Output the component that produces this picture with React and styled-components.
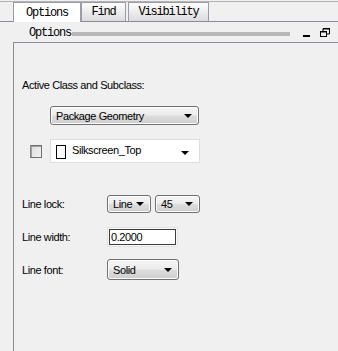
import React from 'react';
import styled, { createGlobalStyle, css } from 'styled-components';

const GlobalStyle = createGlobalStyle`
  html, body {
    margin: 0;
    padding: 0;
    background: #f0f0f0;
  }
  body {
    font-family: 'Liberation Sans', Arial, sans-serif;
    font-size: 11px;
    letter-spacing: -0.4px;
    color: #000;
  }
`;

const Window = styled.div`
  width: 338px;
  height: 351px;
  display: flex;
  flex-direction: column;
  background: #f0f0f0;
  overflow: hidden;
`;

const TopRule = styled.div`
  margin-top: 1px;
  height: 1px;
  background: #b4b4b4;
`;

const TabBar = styled.div`
  display: flex;
  align-items: flex-end;
  height: 19px;
  padding-left: 13px;
  border-bottom: 1px solid #8c8c98;
`;

const Tab = styled.div`
  box-sizing: border-box;
  width: ${p => p.$w}px;
  margin-right: ${p => p.$gap || 0}px;
  height: 19px;
  display: flex;
  align-items: center;
  justify-content: center;
  font-family: 'Liberation Mono', 'DejaVu Sans Mono', monospace;
  font-size: 12px;
  letter-spacing: -1.2px;
  border: 1px solid #9c9ca8;
  border-bottom: none;
  ${p => p.$active
    ? css`
        background: #fff;
        height: 20px;
        margin-bottom: -1px;
      `
    : css`
        background: linear-gradient(#fdfdfd, #dcdcdc);
      `}
`;

const HeaderRow = styled.div`
  display: flex;
  align-items: center;
  height: 20px;
  padding-left: 29px;
  padding-right: 8px;
`;

const HeaderTitle = styled.span`
  font-family: 'Liberation Mono', 'DejaVu Sans Mono', monospace;
  font-size: 12px;
  letter-spacing: -1.2px;
  margin-top: 1px;
`;

const GripBar = styled.div`
  width: 218px;
  height: 4px;
  margin-left: 1px;
  margin-top: 3px;
  background: #b8b8b8;
`;

const HeaderIcons = styled.div`
  display: flex;
  align-items: center;
  margin-left: 13px;
  gap: 10px;
`;

const Panel = styled.div`
  flex: 1;
  margin-left: 13px;
  border-top: 1px solid #8c8c98;
  border-left: 1px solid #8c8c98;
  padding: 36px 0 0 8px;
  display: flex;
  flex-direction: column;
`;

const SectionLabel = styled.div`
  height: 13px;
  line-height: 13px;
`;

const Row = styled.div`
  display: flex;
  align-items: center;
  margin-top: ${p => p.$mt}px;
`;

const FieldLabel = styled.div`
  width: 85px;
`;

const Select = styled.div`
  box-sizing: border-box;
  width: ${p => p.$w}px;
  height: ${p => p.$h || 18}px;
  margin-left: ${p => p.$ml || 0}px;
  display: flex;
  align-items: center;
  padding: 0 6px 0 5px;
  border: 1px solid #707070;
  border-radius: 3px;
  background: linear-gradient(#f6f6f6 0%, #ececec 45%, #dcdcdc 55%, #cfcfcf 100%);
  box-shadow: inset 0 0 0 1px #fcfcfc;
`;

const SelectText = styled.span`
  flex: 1;
  white-space: nowrap;
`;

const Arrow = styled.span`
  width: 0;
  height: 0;
  border-left: 4px solid transparent;
  border-right: 4px solid transparent;
  border-top: 4px solid #000;
`;

const CheckBox = styled.div`
  box-sizing: border-box;
  width: 12px;
  height: 13px;
  margin-left: 8px;
  border: 1px solid #707070;
  border-left-color: #8a8a8a;
  background: linear-gradient(135deg, #dcdcdc, #f4f4f4);
  box-shadow: inset 1px 1px 0 #a0a0a0;
`;

const ClassBox = styled.div`
  box-sizing: border-box;
  width: 150px;
  height: 24px;
  margin-left: 8px;
  display: flex;
  align-items: center;
  padding: 0 10px 0 5px;
  background: #fff;
  border: 1px solid #dedede;
`;

const Swatch = styled.div`
  box-sizing: border-box;
  width: 10px;
  height: 14px;
  border: 1px solid #000;
  background: #fff;
  margin-right: 6px;
  margin-top: 2px;
`;

const ClassText = styled.span`
  flex: 1;
  margin-top: -3px;
`;

const SmallArrow = styled(Arrow)`
  margin-top: 4px;
`;

const TextInput = styled.div`
  box-sizing: border-box;
  width: 71px;
  height: 20px;
  padding: 1px;
  border: 1px solid #e2e2e2;
  background: #f8f8f8;
`;

const TextInner = styled.div`
  box-sizing: border-box;
  height: 100%;
  border: 1px solid #3c3c3c;
  background: #fff;
  line-height: 15px;
  padding-left: 1px;
`;

function MinimizeIcon() {
  return (
    <svg width="7" height="12" viewBox="0 0 7 12">
      <rect x="0" y="9" width="7" height="2" fill="#000" />
    </svg>
  );
}

function RestoreIcon() {
  return (
    <svg width="10" height="9" viewBox="0 0 10 9">
      <path d="M9.5 0.5v5.5H7M3 0.5v2.5" stroke="#000" strokeWidth="1" fill="none" />
      <rect x="3" y="0" width="7" height="1.5" fill="#000" />
      <rect x="0.5" y="3.5" width="6" height="5" stroke="#000" fill="none" />
      <rect x="0.5" y="3" width="6" height="1.5" fill="#000" />
    </svg>
  );
}

export default function App() {
  return (
    <Window>
      <GlobalStyle />
      <TopRule />
      <TabBar>
        <Tab $w={68} $active>Options</Tab>
        <Tab $w={45} $gap={2}>Find</Tab>
        <Tab $w={81}>Visibility</Tab>
      </TabBar>
      <HeaderRow>
        <HeaderTitle>Options</HeaderTitle>
        <GripBar />
        <HeaderIcons>
          <MinimizeIcon />
          <RestoreIcon />
        </HeaderIcons>
      </HeaderRow>
      <Panel>
        <SectionLabel>Active Class and Subclass:</SectionLabel>
        <Row $mt={14}>
          <Select $w={149} $h={19} $ml={28}>
            <SelectText>Package Geometry</SelectText>
            <Arrow />
          </Select>
        </Row>
        <Row $mt={14}>
          <CheckBox />
          <ClassBox>
            <Swatch />
            <ClassText>Silkscreen_Top</ClassText>
            <SmallArrow />
          </ClassBox>
        </Row>
        <Row $mt={32}>
          <FieldLabel>Line lock:</FieldLabel>
          <Select $w={44} $h={18}>
            <SelectText>Line</SelectText>
            <Arrow />
          </Select>
          <Select $w={45} $h={18} $ml={4}>
            <SelectText>45</SelectText>
            <Arrow />
          </Select>
        </Row>
        <Row $mt={14}>
          <FieldLabel>Line width:</FieldLabel>
          <TextInput>
            <TextInner>0.2000</TextInner>
          </TextInput>
        </Row>
        <Row $mt={12}>
          <FieldLabel>Line font:</FieldLabel>
          <Select $w={72} $h={21}>
            <SelectText>Solid</SelectText>
            <Arrow />
          </Select>
        </Row>
      </Panel>
    </Window>
  );
}
